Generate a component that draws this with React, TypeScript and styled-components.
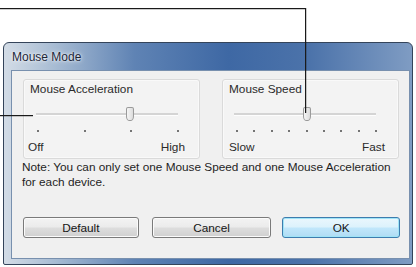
import React from "react";
import styled, { createGlobalStyle } from "styled-components";

const Global = createGlobalStyle`
  html, body { margin: 0; padding: 0; background: #ffffff; }
  body { font-family: "Liberation Sans", "DejaVu Sans", sans-serif; }
`;

const Page = styled.div`
  position: relative;
  width: 416px;
  height: 267px;
  padding: 42px 0 0 3px;
  box-sizing: border-box;
  overflow: hidden;
`;

const CalloutH = styled.div<{ $top: number; $width: number }>`
  position: absolute;
  left: 0;
  top: ${(p) => p.$top}px;
  width: ${(p) => p.$width}px;
  height: 1px;
  background: #1a1a1a;
  box-shadow: 0 0.5px 0.5px rgba(0, 0, 0, 0.4);
  z-index: 5;
`;

const CalloutV = styled.div<{ $left: number; $top: number; $height: number }>`
  position: absolute;
  left: ${(p) => p.$left}px;
  top: ${(p) => p.$top}px;
  width: 1px;
  height: ${(p) => p.$height}px;
  background: #1a1a1a;
  box-shadow: 0.5px 0 0.5px rgba(0, 0, 0, 0.4);
  z-index: 5;
`;

const Window = styled.div`
  width: 410px;
  height: 223px;
  box-sizing: border-box;
  border: 1px solid #34445a;
  border-radius: 6px 6px 2px 2px;
  background: linear-gradient(
    90deg,
    #d3dce6 0%,
    #a9bdd4 12%,
    #5f83b4 32%,
    #3e68a4 55%,
    #4c73aa 75%,
    #7f9cc3 100%
  );
  display: flex;
  flex-direction: column;
`;

const TitleBar = styled.div`
  height: 27px;
  flex: none;
  display: flex;
  align-items: center;
  padding-left: 8px;
  font-size: 12px;
  color: #1c2638;
  text-shadow: 0 0 5px rgba(255, 255, 255, 0.9), 0 0 2px rgba(255, 255, 255, 0.9);
`;

const Client = styled.div`
  flex: 1;
  margin: 0 2px 5px 7px;
  border: 1px solid #7890ae;
  background: #f0f0f0;
  padding: 8px 9px 0 11px;
  display: flex;
  flex-direction: column;
  font-size: 11.8px;
  color: #1e1e1e;
`;

const GroupsRow = styled.div`
  display: flex;
  gap: 22px;
`;

const Group = styled.div`
  width: 177px;
  height: 80px;
  box-sizing: border-box;
  border: 1px solid #dadada;
  border-radius: 3px;
  box-shadow: inset 0 0 0 1px #f9f9f9;
  background: #f3f3f3;
  padding-top: 2px;
  display: flex;
  flex-direction: column;
`;

const GroupLabel = styled.div`
  line-height: 15px;
  padding-left: 6px;
  color: #2a2a2a;
`;

const SliderArea = styled.div<{ $left: number }>`
  padding-left: ${(p) => p.$left}px;
  display: flex;
  flex-direction: column;
`;

const Track = styled.div`
  position: relative;
  width: 142px;
  height: 14px;
  margin-top: 10px;
  display: flex;
  align-items: center;
  &::before {
    content: "";
    display: block;
    width: 100%;
    height: 2px;
    background: #d4d4d4;
    border-bottom: 1px solid #fdfdfd;
  }
`;

const Thumb = styled.div<{ $pos: number }>`
  position: absolute;
  top: 0;
  left: calc(${(p) => p.$pos}% - 3px);
  width: 6px;
  height: 12px;
  border: 1px solid #9a9a9a;
  border-radius: 2px 2px 3px 3px / 2px 2px 5px 5px;
  background: linear-gradient(90deg, #f6f6f6, #dcdcdc);
`;

const Ticks = styled.div<{ $w: number; $l: number }>`
  display: flex;
  justify-content: space-between;
  width: ${(p) => p.$w}px;
  margin-left: ${(p) => p.$l}px;
  margin-top: 9px;
  height: 2px;
`;

const Tick = styled.span`
  width: 2px;
  height: 2px;
  background: #4a4a4a;
  border-radius: 1px;
`;

const RangeLabels = styled.div<{ $l: number; $r: number }>`
  display: flex;
  justify-content: space-between;
  margin-top: 8px;
  padding: 0 ${(p) => p.$r}px 0 ${(p) => p.$l}px;
  line-height: 15px;
  color: #2a2a2a;
`;

const Note = styled.div`
  margin: 1px 0 0 -1px;
  line-height: 15px;
  color: #1e1e1e;
  white-space: nowrap;
`;

const ButtonsRow = styled.div`
  display: flex;
  margin-top: 27px;
`;

const Button = styled.button<{ $w: number; $gap: number; $primary?: boolean }>`
  width: ${(p) => p.$w}px;
  height: 21px;
  margin-right: ${(p) => p.$gap}px;
  padding: 0;
  font-family: inherit;
  font-size: 11.8px;
  color: #151515;
  border-radius: 3px;
  border: 1px solid ${(p) => (p.$primary ? "#3d7cae" : "#7a7a7a")};
  box-shadow: inset 0 0 0 1px ${(p) => (p.$primary ? "#9fe4f7" : "#fbfbfb")};
  background: ${(p) =>
    p.$primary
      ? "linear-gradient(180deg, #eaf7fd 0%, #dcf2fc 48%, #c1e7fb 52%, #afdcf4 100%)"
      : "linear-gradient(180deg, #f3f3f3 0%, #ebebeb 48%, #dddddd 52%, #d0d0d0 100%)"};
`;

type SliderProps = {
  label: string;
  ticks: number;
  pos: number;
  trackLeft: number;
  tickLeft: number;
  tickWidth: number;
  lo: string;
  hi: string;
  loPad: number;
  hiPad: number;
};

function SliderGroup(p: SliderProps) {
  return (
    <Group>
      <GroupLabel>{p.label}</GroupLabel>
      <SliderArea $left={p.trackLeft}>
        <Track>
          <Thumb $pos={p.pos} />
        </Track>
      </SliderArea>
      <Ticks $w={p.tickWidth} $l={p.tickLeft}>
        {Array.from({ length: p.ticks }).map((_, i) => (
          <Tick key={i} />
        ))}
      </Ticks>
      <RangeLabels $l={p.loPad} $r={p.hiPad}>
        <span>{p.lo}</span>
        <span>{p.hi}</span>
      </RangeLabels>
    </Group>
  );
}

export default function App() {
  return (
    <>
      <Global />
      <Page>
        <CalloutH $top={8} $width={306} />
        <CalloutV $left={305} $top={8} $height={105} />
        <CalloutH $top={115} $width={33} />
        <Window>
          <TitleBar>Mouse Mode</TitleBar>
          <Client>
            <GroupsRow>
              <SliderGroup
                label="Mouse Acceleration"
                ticks={4}
                pos={65.5}
                trackLeft={12}
                tickLeft={13}
                tickWidth={142}
                lo="Off"
                hi="High"
                loPad={4}
                hiPad={14}
              />
              <SliderGroup
                label="Mouse Speed"
                ticks={9}
                pos={50.7}
                trackLeft={11}
                tickLeft={13}
                tickWidth={141}
                lo="Slow"
                hi="Fast"
                loPad={6}
                hiPad={13}
              />
            </GroupsRow>
            <Note>
              Note: You can only set one Mouse Speed and one Mouse Acceleration
              <br />
              for each device.
            </Note>
            <ButtonsRow>
              <Button $w={116} $gap={13}>Default</Button>
              <Button $w={120} $gap={11}>Cancel</Button>
              <Button $w={118} $gap={0} $primary>OK</Button>
            </ButtonsRow>
          </Client>
        </Window>
      </Page>
    </>
  );
}
